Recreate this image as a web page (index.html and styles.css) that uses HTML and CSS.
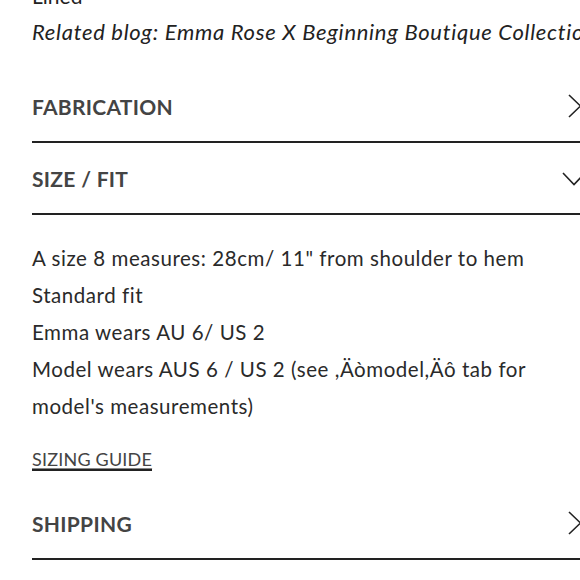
FILE: index.html
```html
<!DOCTYPE html>
<html>
<head>
<meta charset="utf-8">
<link rel="stylesheet" href="styles.css">
</head>
<body>
<div class="page">
  <div class="desc">
    <p class="line">Lined</p>
    <p class="line blog">Related blog: Emma Rose X Beginning Boutique Collection</p>
  </div>
  <div class="acc-head">
    <span class="acc-title">FABRICATION</span>
    <svg class="chev-right" width="14" height="24" viewBox="0 0 14 24"><path d="M1 1 L12.5 12 L1 23" fill="none" stroke="#222" stroke-width="1.6"/></svg>
  </div>
  <div class="acc-head">
    <span class="acc-title">SIZE / FIT</span>
    <svg class="chev-down" width="24" height="14" viewBox="0 0 24 14"><path d="M1 1 L12 12.5 L23 1" fill="none" stroke="#222" stroke-width="1.6"/></svg>
  </div>
  <div class="panel">
    <p class="body">A size 8 measures: 28cm/ 11" from shoulder to hem</p>
    <p class="body">Standard fit</p>
    <p class="body">Emma wears AU 6/ US 2</p>
    <p class="body">Model wears AUS 6 / US 2 (see ,Äòmodel,Äô tab for model's measurements)</p>
    <a class="guide" href="#">SIZING GUIDE</a>
  </div>
  <div class="acc-head">
    <span class="acc-title">SHIPPING</span>
    <svg class="chev-right" width="14" height="24" viewBox="0 0 14 24"><path d="M1 1 L12.5 12 L1 23" fill="none" stroke="#222" stroke-width="1.6"/></svg>
  </div>
</div>
</body>
</html>
```
FILE: styles.css
```css
html, body {
  margin: 0;
  padding: 0;
  background: #fff;
  overflow: hidden;
}
body {
  width: 580px;
  height: 580px;
  font-family: "Lato", "Open Sans", sans-serif;
  color: #222;
}
.page {
  margin-left: 32px;
  width: 550px;
  margin-top: -22px;
}
p { margin: 0; }
.desc {
  padding-bottom: 21px;
}
.line {
  font-size: 21px;
  line-height: 36px;
  white-space: nowrap;
  color: #222;
}
.blog {
  font-style: italic;
  font-size: 22px;
  letter-spacing: 0.7px;
}
.acc-head {
  height: 70px;
  border-bottom: 2px solid #222;
  display: flex;
  align-items: center;
  justify-content: space-between;
}
.acc-title {
  font-size: 21px;
  font-weight: 700;
  color: #444;
  letter-spacing: 0.3px;
}
.chev-down { margin-right: -4px; margin-top: 2px; }
.panel {
  padding-top: 25px;
  padding-bottom: 17px;
  width: 540px;
}
.body {
  font-size: 20.5px;
  line-height: 37px;
  letter-spacing: 0.55px;
  color: #2a2a2a;
}
.guide {
  display: inline-block;
  margin-top: 24px;
  font-size: 18px;
  line-height: 20px;
  letter-spacing: 0.2px;
  color: #444;
  text-decoration: underline;
  text-decoration-color: #888;
  text-underline-offset: 2px;
  border-bottom: 2px solid #222;
}
```
